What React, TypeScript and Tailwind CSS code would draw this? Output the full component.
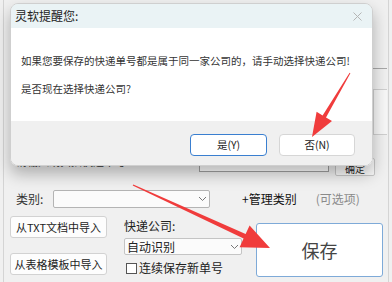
import React from 'react';

const font = { fontFamily: '"Noto Sans CJK SC", "Noto Sans", sans-serif' };

function Chevron() {
  return (
    <svg width="9" height="6" viewBox="0 0 9 6" className="shrink-0">
      <path d="M1 1 L4.5 4.5 L8 1" fill="none" stroke="#777" strokeWidth="1" />
    </svg>
  );
}

function Dialog() {
  return (
    <div className="absolute left-[10px] top-[3px] flex h-[163px] w-[363px] flex-col overflow-hidden rounded-[8px] border border-[#cfcfcf] shadow-[0_8px_16px_rgba(0,0,0,0.28)]">
      <div className="flex h-[24px] shrink-0 items-center justify-between bg-[#eaf3f5] pl-[4px] pr-[10px]">
        <span className="text-[12px] text-[#222]">灵软提醒您:</span>
        <svg width="9" height="9" viewBox="0 0 9 9">
          <path d="M0.5 0.5 L8.5 8.5 M8.5 0.5 L0.5 8.5" stroke="#b5b5b5" strokeWidth="1" />
        </svg>
      </div>
      <div className="flex h-[93px] shrink-0 flex-col bg-white pl-[10px] text-[10.5px] text-[#333]">
        <p className="mt-[26px] leading-[14px]">如果您要保存的快递单号都是属于同一家公司的，请手动选择快递公司!</p>
        <p className="mt-[14px] leading-[14px]">是否现在选择快递公司?</p>
      </div>
      <div className="flex flex-1 items-start justify-end gap-[12px] bg-[#f0f0f0] pr-[17px] pt-[13px]">
        <button className="flex h-[22px] w-[77px] items-center justify-center rounded-[4px] border-[1.5px] border-[#3a7fd0] bg-white text-[10.5px] text-[#222]">
          是(Y)
        </button>
        <button className="flex h-[22px] w-[76px] items-center justify-center rounded-[4px] border border-[#d6d6d6] bg-white text-[10.5px] text-[#222]">
          否(N)
        </button>
      </div>
    </div>
  );
}

function Arrows() {
  return (
    <svg className="pointer-events-none absolute inset-0" width="392" height="282" viewBox="0 0 392 282">
      <polygon
        points="350.4,73.3 326,117.4 332,121 312,137 316.6,111.8 322.6,115.4 349.6,72.7"
        fill="#f03c3c"
      />
      <polygon
        points="132.7,185.5 243.6,238.6 239.6,247.2 270,248 249.6,225.4 245.6,234 133.3,184.5"
        fill="#f03c3c"
      />
    </svg>
  );
}

export default function App() {
  return (
    <div className="relative h-[282px] w-[392px] overflow-hidden bg-[#f0f0f0] text-[12px] text-[#222]" style={font}>
      <div className="mx-[3px] flex h-full flex-col border-x border-[#d4d4d4]">
        {/* area hidden behind the dialog */}
        <div className="h-[68px] shrink-0" />
        <div className="ml-[6px] mr-[1px] h-[90px] shrink-0 border-t border-[#a8a8a8] pt-[20px]">
          <div className="ml-auto h-[46px] w-[14px] border border-r-0 border-[#cfcfcf] bg-[#f7f7f7]" />
        </div>
        <div className="flex h-[18px] shrink-0 items-start pl-[12px]">
          <span className="-mt-[4px] w-[180px] text-[11px] leading-[14px] text-[#333]">请输入或扫描快递单号：</span>
          <div className="ml-[3px] mt-[0px] h-[14px] w-[130px] border border-[#a0a0a0] bg-white" />
          <div className="ml-[6px] flex h-[18px] w-[40px] items-end justify-center rounded-[2px] border border-[#c8c8c8] bg-[#fafafa] text-[10px] leading-[12px]">
            确定
          </div>
        </div>

        {/* category row */}
        <div className="mt-[14px] flex h-[18px] shrink-0 items-center pl-[12px]">
          <span className="w-[37px] text-[#333]">类别:</span>
          <div className="flex h-[18px] w-[157px] items-center justify-end rounded-[2px] border border-[#b4b4b4] bg-[#fbfbfb] pr-[2px]">
            <Chevron />
          </div>
          <span className="ml-[32px] text-[#111]">+管理类别</span>
          <span className="ml-[19px] text-[#8a8a8a]">(可选项)</span>
        </div>

        {/* lower area */}
        <div className="mt-[8px] flex pl-[6px]">
          <div className="flex w-[97px] flex-col gap-[15px]">
            <button className="flex h-[22px] items-center justify-center whitespace-nowrap rounded-[3px] border border-[#d2d2d2] bg-[#fdfdfd] px-0 text-[11px]">
              从TXT文档中导入
            </button>
            <button className="flex h-[22px] items-center justify-center whitespace-nowrap rounded-[3px] border border-[#d2d2d2] bg-[#fdfdfd] px-0 text-[11px]">
              从表格模板中导入
            </button>
          </div>
          <div className="ml-[17px] flex w-[118px] flex-col">
            <span className="mt-[1px] h-[18px] leading-[18px]">快递公司:</span>
            <div className="mt-[3px] flex h-[17px] items-center justify-between rounded-[2px] border border-[#c4c4c4] bg-[#fbfbfb] pl-[2px] pr-[2px]">
              <span className="leading-[14px]">自动识别</span>
              <Chevron />
            </div>
            <label className="mt-[6px] flex h-[14px] items-center gap-[2px] pl-[2px]">
              <span className="h-[11px] w-[11px] border border-[#555] bg-white" />
              <span className="leading-[14px]">连续保存新单号</span>
            </label>
          </div>
          <button className="ml-[14px] mt-[7px] flex h-[54px] w-[127px] items-center justify-center rounded-[3px] border border-[#7eaad8] bg-white text-[18px] text-[#444]">
            保存
          </button>
        </div>
      </div>
      <Dialog />
      <Arrows />
    </div>
  );
}
